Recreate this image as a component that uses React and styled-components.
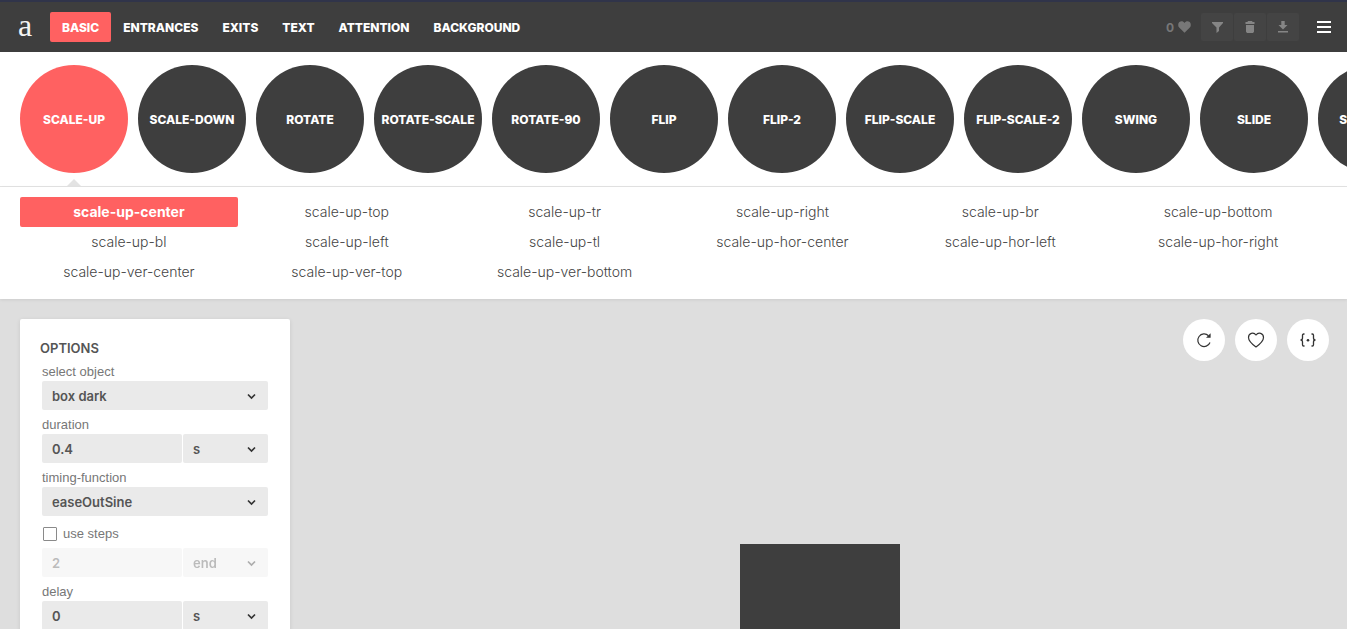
import React, { useState } from "react";
import styled, { createGlobalStyle } from "styled-components";

const coral = "#ff6161";
const dark = "#3e3e3e";
const geometric = 'Inter, "Liberation Sans", sans-serif';
const plain = '"Liberation Sans", Arial, sans-serif';

const GlobalStyle = createGlobalStyle`
  *, *::before, *::after { box-sizing: border-box; }
  body { margin: 0; background: #dedede; font-family: ${geometric}; }
  button, input, select { font: inherit; }
  button { border: 0; padding: 0; cursor: pointer; }
`;

const Page = styled.div`
  display: flex;
  flex-direction: column;
  height: 100vh;
  overflow: hidden;
`;

const Header = styled.header`
  flex: none;
  display: flex;
  align-items: center;
  height: 52px;
  padding: 0 16px 0 18px;
  background: ${dark};
  border-top: 2px solid #30344a;
`;

const Logo = styled.a`
  width: 32px;
  font: 32px/32px "Liberation Serif", serif;
  color: #f4f4f4;
  text-decoration: none;
  padding-bottom: 4px;
`;

const Nav = styled.nav`
  display: flex;
  flex: 1;
`;

const NavButton = styled.button`
  height: 30px;
  padding: 0 12px;
  border-radius: 2px;
  background: ${(p) => (p.$active ? coral : "transparent")};
  color: #fff;
  font-size: 12px;
  font-weight: 800;
`;

const Likes = styled.span`
  display: flex;
  align-items: center;
  gap: 4px;
  margin-right: 10px;
  color: #777;
  font-size: 12px;
  font-weight: 700;
`;

const Tools = styled.div`
  display: flex;
  gap: 1px;
`;

const ToolButton = styled.button`
  display: grid;
  place-items: center;
  width: 32px;
  height: 28px;
  border-radius: 2px;
  background: #444;
  color: #858585;
`;

const MenuButton = styled.button`
  display: flex;
  flex-direction: column;
  gap: 3px;
  width: 14px;
  margin-left: 18px;
  background: none;
`;

const MenuBar = styled.span`
  height: 2px;
  width: 100%;
  background: #fff;
`;

const Groups = styled.div`
  flex: none;
  display: flex;
  gap: 10px;
  padding: 13px 20px;
  background: #fff;
  border-bottom: 1px solid #e3e3e3;
  overflow: hidden;
`;

const Group = styled.button`
  position: relative;
  flex: none;
  width: 108px;
  height: 108px;
  border-radius: 50%;
  background: ${(p) => (p.$active ? coral : dark)};
  color: #fff;
  font-size: 12px;
  font-weight: 800;
  white-space: nowrap;

  &::after {
    content: "";
    display: ${(p) => (p.$active ? "block" : "none")};
    position: absolute;
    top: 114px;
    left: 47px;
    border: 7px solid transparent;
    border-top: 0;
    border-bottom-color: #e3e3e3;
  }
`;

const Variants = styled.div`
  flex: none;
  position: relative;
  display: grid;
  grid-template-columns: repeat(6, 1fr);
  padding: 10px 20px 12px;
  background: #fff;
  box-shadow: 0 1px 3px rgba(0, 0, 0, 0.08);
`;

const Variant = styled.button`
  height: 30px;
  padding-bottom: 2px;
  border-radius: 2px;
  background: ${(p) => (p.$active ? coral : "transparent")};
  color: ${(p) => (p.$active ? "#fff" : "#444")};
  font-size: 14px;
  font-weight: ${(p) => (p.$active ? 700 : 300)};
`;

const Workspace = styled.main`
  flex: 1;
  display: flex;
  align-items: flex-start;
  gap: 20px;
  min-height: 0;
  padding: 20px 18px 0 20px;
`;

const Panel = styled.form`
  flex: none;
  width: 270px;
  padding: 20px 22px;
  background: #fff;
  border-radius: 2px;
  box-shadow: 0 1px 4px rgba(0, 0, 0, 0.1);
`;

const PanelTitle = styled.h2`
  margin: 0 -2px;
  font-size: 13px;
  line-height: 18px;
  font-weight: 600;
  color: #555;
`;

const Label = styled.label`
  display: block;
  height: 24px;
  padding-top: 3px;
  font: 13px/24px ${plain};
  color: #777;
`;

const FieldRow = styled.div`
  display: grid;
  grid-template-columns: ${(p) => (p.$split ? "140px 1fr" : "1fr")};
  gap: 1px;
  opacity: ${(p) => (p.$off ? 0.4 : 1)};
`;

const TextInput = styled.input`
  width: 100%;
  height: 29px;
  padding: 0 10px;
  border: 0;
  border-radius: 2px;
  background: #eaeaea;
  color: #555;
  font-size: 13px;
  font-weight: 600;
`;

const SelectWrap = styled.div`
  display: grid;
  align-items: center;

  & > * { grid-area: 1 / 1; }
  & > svg { justify-self: end; margin: 2px 12px 0 0; pointer-events: none; }
`;

const SelectBox = styled.select`
  appearance: none;
  width: 100%;
  height: 29px;
  padding: 0 10px;
  border: 0;
  border-radius: 2px;
  background: #eaeaea;
  color: #555;
  font-size: 13px;
  font-weight: 600;
  opacity: 1;
`;

const CheckRow = styled.label`
  display: flex;
  align-items: center;
  gap: 6px;
  height: 32px;
  padding: 4px 1px 0;
  font: 13px/16px ${plain};
  color: #777;
`;

const CheckBox = styled.input`
  appearance: none;
  width: 14px;
  height: 14px;
  margin: 0;
  border: 1px solid #8a8a8a;
  border-radius: 1px;
  background: #fff;

  &:checked { background: ${coral}; }
`;

const Stage = styled.section`
  flex: 1;
  display: flex;
  flex-direction: column;
  align-items: center;
  gap: 183px;
`;

const Actions = styled.div`
  align-self: flex-end;
  display: flex;
  gap: 10px;
`;

const RoundButton = styled.button`
  display: grid;
  place-items: center;
  width: 42px;
  height: 42px;
  border-radius: 50%;
  background: #fff;
  color: #333;
`;

const DemoBox = styled.div`
  width: 160px;
  height: 160px;
  background: ${dark};
`;

const HeartSolid = () => (
  <svg width="13" height="12" viewBox="0 0 13 12" fill="currentColor" aria-hidden="true">
    <path d="M6.5 11.7 1.2 6.6C-.2 5.1-.1 2.400 1.300 1.100 2.900-.3 5.300 0 6.500 1.900 7.700 0 10.100-.3 11.700 1.100c1.400 1.300 1.500 4 .1 5.500z" />
  </svg>
);

const Funnel = () => (
  <svg width="11" height="11" viewBox="0 0 11 11" fill="currentColor" aria-hidden="true">
    <path d="M0 0h11v1L7 5.500V9l-2.500 2V5.500L0 1z" />
  </svg>
);

const Trash = () => (
  <svg width="10" height="12" viewBox="0 0 10 12" fill="currentColor" aria-hidden="true">
    <path d="M3 0h4l.6 1H9.500v2H.5V1h1.900zM1 4h8v6.800L8 12H2l-1-1.200z" />
  </svg>
);

const Download = () => (
  <svg width="10" height="12" viewBox="0 0 10 12" fill="currentColor" aria-hidden="true">
    <path d="M3.300 0h3.400v4H9.500L5 8.600.5 4h2.800zM0 10h10v1.500H0z" />
  </svg>
);

const Replay = () => (
  <svg width="16" height="16" viewBox="0 0 16 16" fill="none" stroke="currentColor" strokeWidth="1.200" aria-hidden="true">
    <path d="M14 10.500A6.300 6.300 0 1 1 12.500 3.700" />
    <path d="M14.600 1.200v4.600H10z" fill="currentColor" stroke="none" />
  </svg>
);

const HeartLine = () => (
  <svg width="18" height="16" viewBox="0 0 18 16" fill="none" stroke="currentColor" strokeWidth="1.200" strokeLinejoin="round" aria-hidden="true">
    <path d="M9 15C5 12 1.500 9.200 1.500 5.400 1.500 1.400 6.500-.4 9 3 11.500-.4 16.500 1.400 16.500 5.400 16.500 9.200 13 12 9 15z" />
  </svg>
);

const Braces = () => (
  <svg width="16" height="14" viewBox="0 0 16 14" fill="none" stroke="currentColor" strokeWidth="1.300" aria-hidden="true">
    <path d="M4.500 1H3.700Q2.500 1 2.500 2.300V5Q2.500 7 .5 7 2.500 7 2.500 9v2.700Q2.500 13 3.700 13h.8M11.500 1h.8q1.200 0 1.200 1.300V5q0 2 2 2-2 0-2 2v2.700q0 1.300-1.200 1.300h-.8" />
    <circle cx="8" cy="7.200" r="1.300" fill="currentColor" stroke="none" />
  </svg>
);

const Chevron = () => (
  <svg width="9" height="7" viewBox="0 0 9 7" fill="none" stroke="#333" strokeWidth="1.700" aria-hidden="true">
    <path d="M1 1.500 4.500 5 8 1.500" />
  </svg>
);

const sections = ["BASIC", "ENTRANCES", "EXITS", "TEXT", "ATTENTION", "BACKGROUND"];
const groups = [
  "SCALE-UP", "SCALE-DOWN", "ROTATE", "ROTATE-SCALE", "ROTATE-90", "FLIP",
  "FLIP-2", "FLIP-SCALE", "FLIP-SCALE-2", "SWING", "SLIDE", "SLIDE-BCK",
];
const variants = [
  "center", "top", "tr", "right", "br", "bottom", "bl", "left", "tl",
  "hor-center", "hor-left", "hor-right", "ver-center", "ver-top", "ver-bottom",
].map((name) => `scale-up-${name}`);

function Dropdown({ options, ...rest }) {
  return (
    <SelectWrap>
      <SelectBox {...rest}>
        {options.map((o) => <option key={o}>{o}</option>)}
      </SelectBox>
      <Chevron />
    </SelectWrap>
  );
}

export default function App() {
  const [section, setSection] = useState("BASIC");
  const [group, setGroup] = useState("SCALE-UP");
  const [variant, setVariant] = useState("scale-up-center");
  const [steps, setSteps] = useState(false);

  return (
    <Page>
      <GlobalStyle />
      <Header>
        <Logo href="#">a</Logo>
        <Nav>
          {sections.map((s) => (
            <NavButton key={s} $active={s === section} onClick={() => setSection(s)}>{s}</NavButton>
          ))}
        </Nav>
        <Likes>0 <HeartSolid /></Likes>
        <Tools>
          <ToolButton aria-label="Filter"><Funnel /></ToolButton>
          <ToolButton aria-label="Delete"><Trash /></ToolButton>
          <ToolButton aria-label="Download"><Download /></ToolButton>
        </Tools>
        <MenuButton aria-label="Menu"><MenuBar /><MenuBar /><MenuBar /></MenuButton>
      </Header>

      <Groups>
        {groups.map((g) => (
          <Group key={g} $active={g === group} onClick={() => setGroup(g)}>{g}</Group>
        ))}
      </Groups>

      <Variants>
        {variants.map((v) => (
          <Variant key={v} $active={v === variant} onClick={() => setVariant(v)}>{v}</Variant>
        ))}
      </Variants>

      <Workspace>
        <Panel>
          <PanelTitle>OPTIONS</PanelTitle>
          <Label htmlFor="object">select object</Label>
          <FieldRow>
            <Dropdown id="object" options={["box dark", "box light", "text"]} />
          </FieldRow>
          <Label htmlFor="duration">duration</Label>
          <FieldRow $split>
            <TextInput id="duration" defaultValue="0.4" />
            <Dropdown aria-label="duration unit" options={["s", "ms"]} />
          </FieldRow>
          <Label htmlFor="timing">timing-function</Label>
          <FieldRow>
            <Dropdown id="timing" options={["easeOutSine", "linear", "ease"]} />
          </FieldRow>
          <CheckRow>
            <CheckBox type="checkbox" checked={steps} onChange={(e) => setSteps(e.target.checked)} />
            use steps
          </CheckRow>
          <FieldRow $split $off={!steps}>
            <TextInput aria-label="steps" defaultValue="2" disabled={!steps} />
            <Dropdown aria-label="step position" options={["end", "start"]} disabled={!steps} />
          </FieldRow>
          <Label htmlFor="delay">delay</Label>
          <FieldRow $split>
            <TextInput id="delay" defaultValue="0" />
            <Dropdown aria-label="delay unit" options={["s", "ms"]} />
          </FieldRow>
        </Panel>
        <Stage>
          <Actions>
            <RoundButton aria-label="Replay"><Replay /></RoundButton>
            <RoundButton aria-label="Favourite"><HeartLine /></RoundButton>
            <RoundButton aria-label="Show code"><Braces /></RoundButton>
          </Actions>
          <DemoBox />
        </Stage>
      </Workspace>
    </Page>
  );
}
